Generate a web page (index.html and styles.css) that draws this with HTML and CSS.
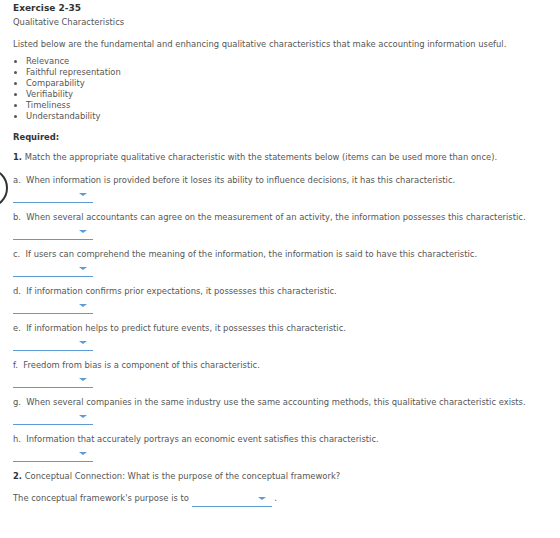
FILE: index.html
```html
<!DOCTYPE html>
<html>
<head>
<meta charset="utf-8">
<link rel="stylesheet" href="styles.css">
</head>
<body>
<div class="page">
  <div class="arc"></div>
  <div class="title">Exercise 2-35</div>
  <div class="subtitle">Qualitative Characteristics</div>
  <p class="intro">Listed below are the fundamental and enhancing qualitative characteristics that make accounting information useful.</p>
  <ul class="list">
    <li>Relevance</li>
    <li>Faithful representation</li>
    <li>Comparability</li>
    <li>Verifiability</li>
    <li>Timeliness</li>
    <li>Understandability</li>
  </ul>
  <div class="required">Required:</div>
  <p class="q"><b>1.</b> Match the appropriate qualitative characteristic with the statements below (items can be used more than once).</p>

  <div class="item"><p>a.&nbsp; When information is provided before it loses its ability to influence decisions, it has this characteristic.</p><div class="dd"><span class="caret"></span></div></div>
  <div class="item"><p>b.&nbsp; When several accountants can agree on the measurement of an activity, the information possesses this characteristic.</p><div class="dd"><span class="caret"></span></div></div>
  <div class="item"><p>c.&nbsp; If users can comprehend the meaning of the information, the information is said to have this characteristic.</p><div class="dd"><span class="caret"></span></div></div>
  <div class="item"><p>d.&nbsp; If information confirms prior expectations, it possesses this characteristic.</p><div class="dd"><span class="caret"></span></div></div>
  <div class="item"><p>e.&nbsp; If information helps to predict future events, it possesses this characteristic.</p><div class="dd"><span class="caret"></span></div></div>
  <div class="item"><p>f.&nbsp; Freedom from bias is a component of this characteristic.</p><div class="dd"><span class="caret"></span></div></div>
  <div class="item"><p>g.&nbsp; When several companies in the same industry use the same accounting methods, this qualitative characteristic exists.</p><div class="dd"><span class="caret"></span></div></div>
  <div class="item"><p>h.&nbsp; Information that accurately portrays an economic event satisfies this characteristic.</p><div class="dd"><span class="caret"></span></div></div>

  <p class="q2"><b>2.</b> Conceptual Connection: What is the purpose of the conceptual framework?</p>
  <p class="last">The conceptual framework's purpose is to <span class="dd inline"><span class="caret"></span></span> .</p>
</div>
</body>
</html>
```
FILE: styles.css
```css
html, body {
  margin: 0;
  padding: 0;
  background: #fff;
}
.page {
  position: relative;
  padding: 3px 13px 0 13px;
  font-family: "DejaVu Sans", Verdana, sans-serif;
  font-size: 8.4px;
  line-height: 11px;
  color: #555;
  white-space: nowrap;
}
p { margin: 0; }
.title {
  font-weight: bold;
  color: #333;
  font-size: 9px;
}
.subtitle {
  margin-top: 3px;
}
.intro {
  margin-top: 11px;
}
.list {
  margin: 6px 0 0 0;
  padding: 0 0 0 13px;
}
.list li {
  line-height: 11px;
}
.required {
  margin-top: 10px;
  font-weight: bold;
  color: #333;
}
.q {
  margin-top: 9px;
}
.q b, .q2 b { color: #333; }
.item {
  margin-top: 12px;
}
.item + .item {
  margin-top: 9px;
}
.dd {
  display: block;
  position: relative;
  width: 80px;
  height: 13px;
  border-bottom: 1px solid #5b9bd5;
  margin-top: 3px;
}
.dd.inline {
  display: inline-block;
  vertical-align: -6px;
  margin-top: 0;
}
.caret {
  position: absolute;
  right: 6px;
  top: 4px;
  width: 0;
  height: 0;
  border-left: 4px solid transparent;
  border-right: 4px solid transparent;
  border-top: 3px solid #5b9bd5;
}
.q2 {
  margin-top: 9px;
}
.last {
  margin-top: 11px;
}
.arc {
  position: absolute;
  left: -32px;
  top: 168px;
  width: 36px;
  height: 36px;
  border: 2px solid #333;
  border-radius: 50%;
}
```
